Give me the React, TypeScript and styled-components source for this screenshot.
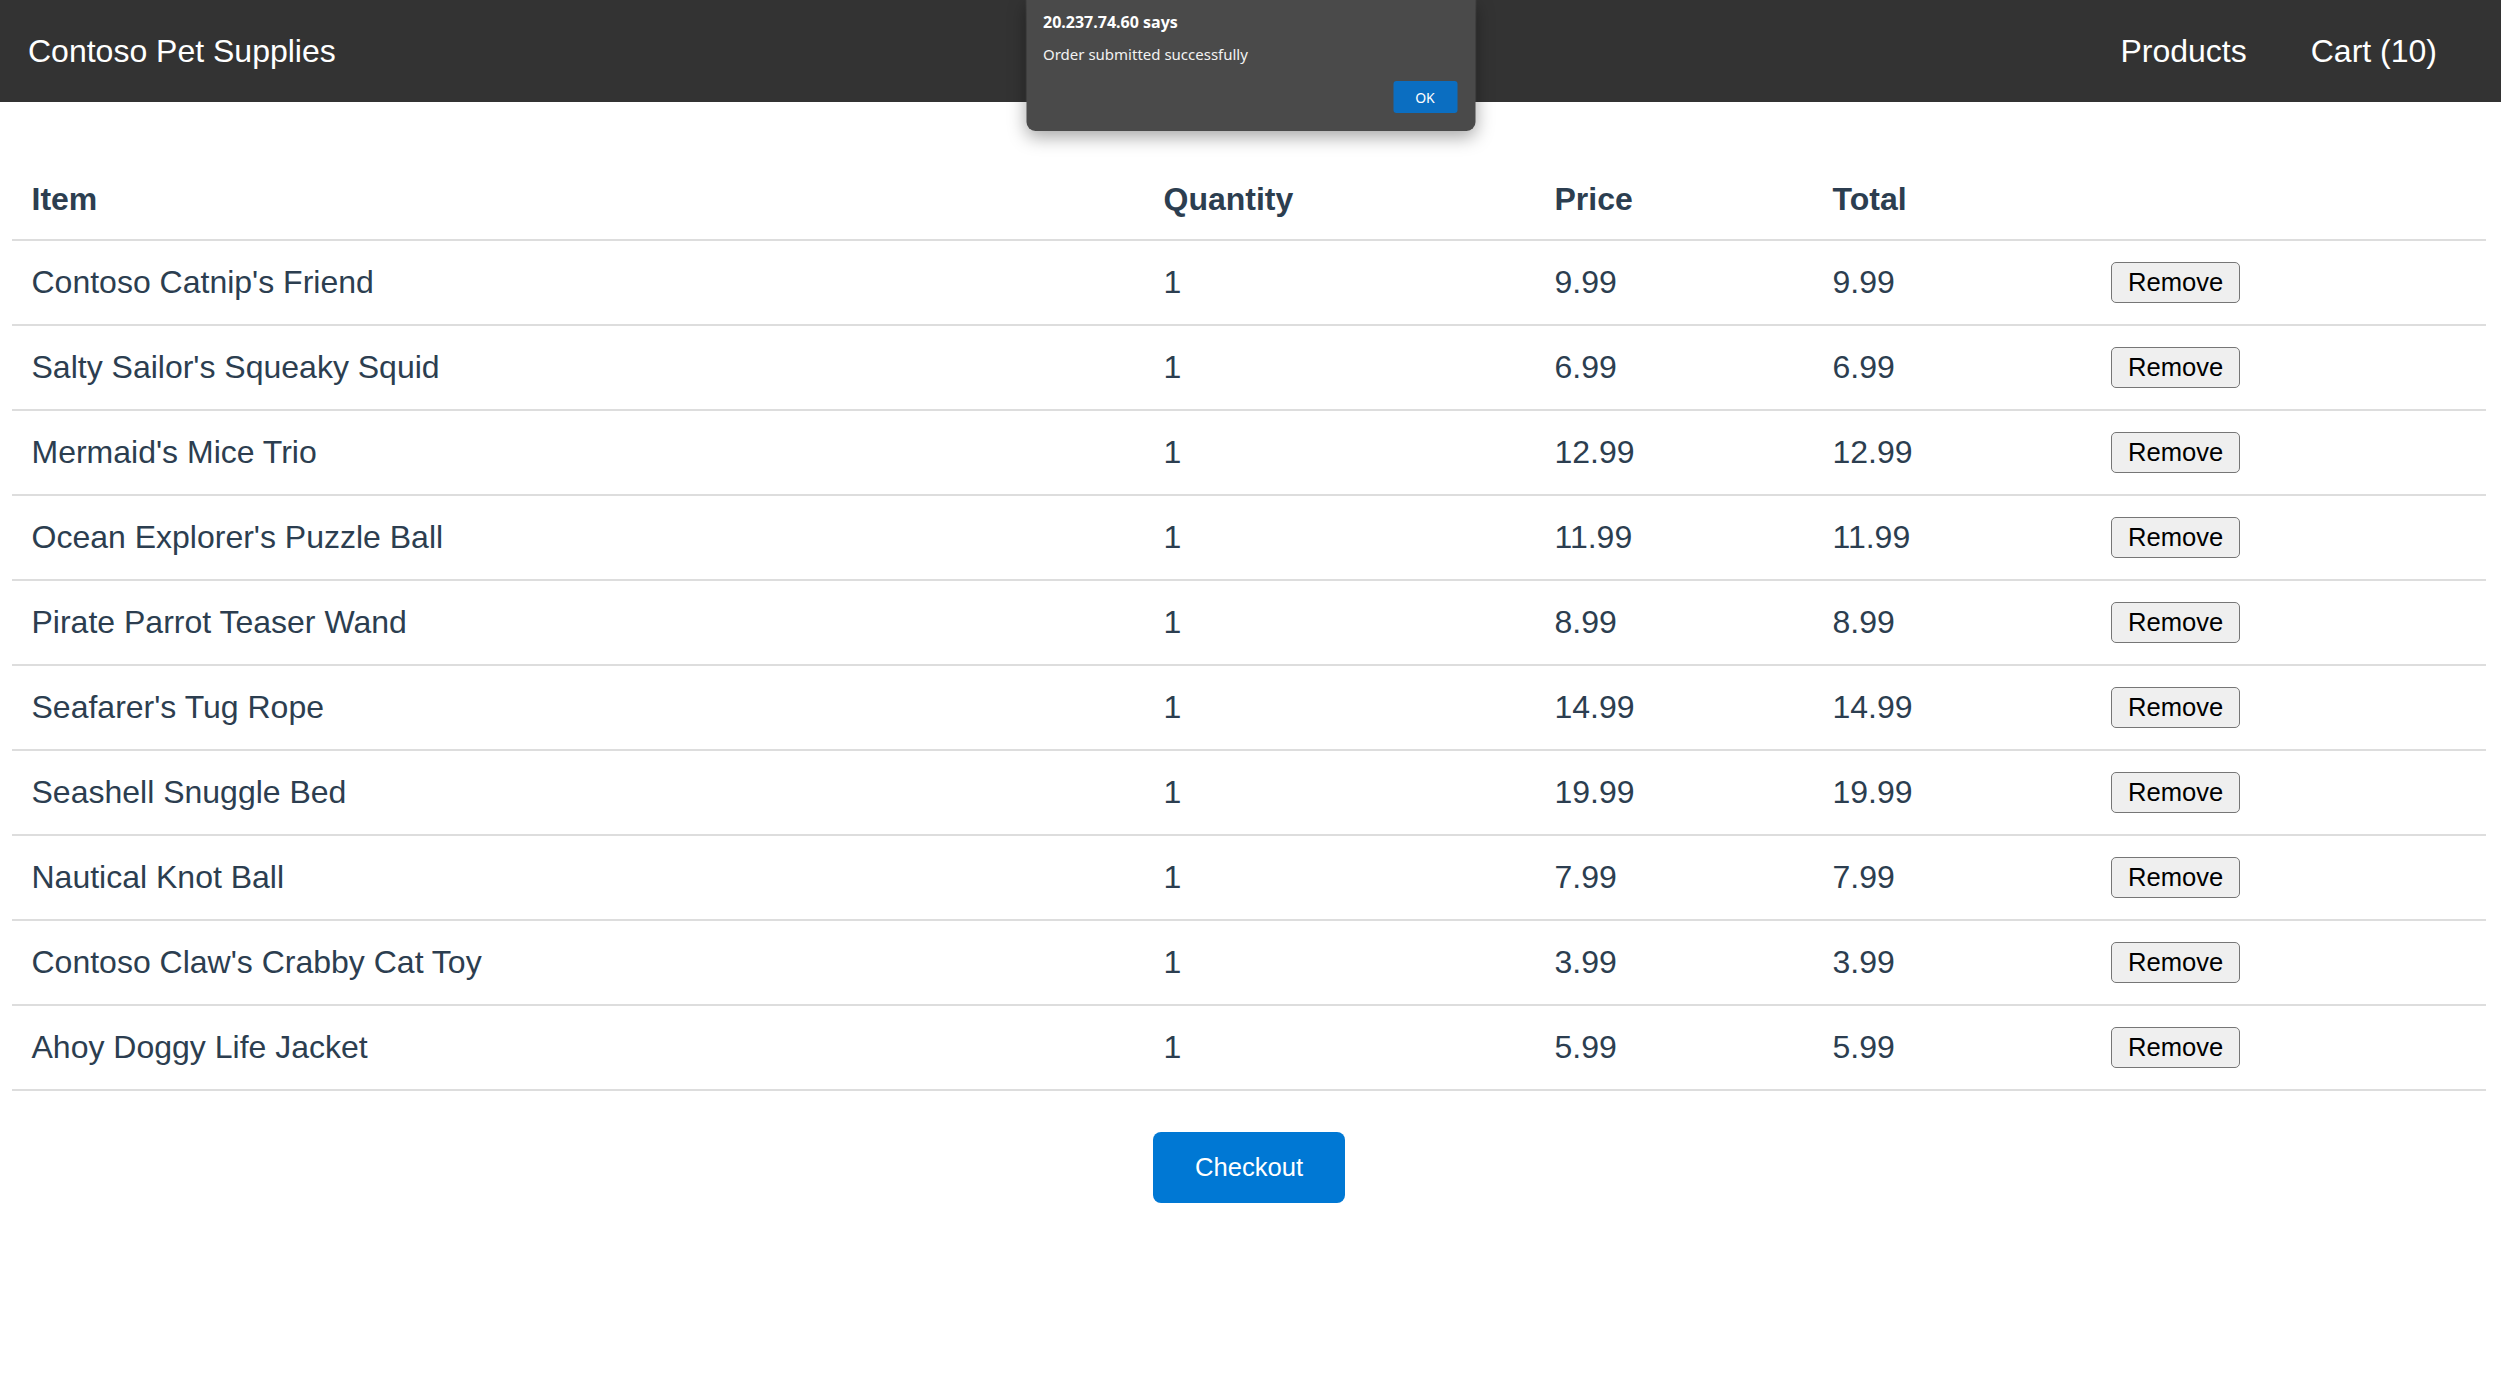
import React from "react";
import styled, { createGlobalStyle } from "styled-components";

const GlobalStyle = createGlobalStyle`
  html, body {
    margin: 0;
    padding: 0;
    background: #ffffff;
  }
  body {
    font-family: "Liberation Sans", Arial, Helvetica, sans-serif;
    color: #2c3e50;
  }
`;

const Page = styled.div`
  position: relative;
  min-height: 1395px;
  background: #ffffff;
`;

const Header = styled.header`
  height: 102px;
  background: #333333;
  display: flex;
  align-items: center;
  justify-content: space-between;
  padding: 0 64px 0 28px;
  box-sizing: border-box;
`;

const Brand = styled.div`
  color: #ffffff;
  font-size: 32px;
`;

const Nav = styled.nav`
  display: flex;
  gap: 64px;
`;

const NavLink = styled.a`
  color: #ffffff;
  font-size: 32px;
  text-decoration: none;
  cursor: pointer;
`;

const Main = styled.main`
  padding: 54px 15px 0 12px;
  display: flex;
  flex-direction: column;
  align-items: center;
`;

const Table = styled.table`
  width: 100%;
  border-collapse: collapse;
  table-layout: fixed;
  font-size: 32px;
  color: #2c3e50;
`;

const Col = styled.col<{ $w?: number }>`
  width: ${(p) => (p.$w ? `${p.$w}px` : "auto")};
`;

const Th = styled.th`
  text-align: left;
  font-weight: bold;
  height: 62px;
  padding: 0 19.5px 21px 19.5px;
  border-bottom: 2px solid #dddddd;
  vertical-align: bottom;
`;

const Td = styled.td`
  height: 83px;
  padding: 0 19.5px;
  border-bottom: 2px solid #dddddd;
  vertical-align: middle;
  white-space: nowrap;
`;

const RemoveButton = styled.button`
  font-family: "Liberation Sans", Arial, sans-serif;
  font-size: 25.6px;
  color: #000000;
  background: #efefef;
  border: 1.5px solid #767676;
  border-radius: 5px;
  padding: 5px 16px;
  line-height: normal;
  cursor: pointer;
`;

const CheckoutButton = styled.button`
  margin-top: 41px;
  font-family: "Liberation Sans", Arial, sans-serif;
  font-size: 25.6px;
  color: #ffffff;
  background: #0078d4;
  border: none;
  border-radius: 8px;
  padding: 21px 42px;
  line-height: normal;
  cursor: pointer;
`;

const Dialog = styled.div`
  position: absolute;
  top: 0;
  left: 50%;
  transform: translateX(-50%);
  width: 449px;
  height: 131px;
  box-sizing: border-box;
  background: #4a4a4a;
  border-radius: 0 0 9px 9px;
  box-shadow: 0 6px 18px rgba(0, 0, 0, 0.35), 0 0 0 1px rgba(255, 255, 255, 0.06);
  padding: 12px 18px 0 17px;
  font-family: "Noto Sans", "Open Sans", sans-serif;
  color: #ffffff;
  display: flex;
  flex-direction: column;
`;

const DialogTitle = styled.div`
  font-size: 16px;
  font-weight: bold;
  line-height: 20px;
`;

const DialogMessage = styled.div`
  margin-top: 12px;
  font-size: 15px;
  line-height: 20px;
  color: #f2f2f2;
`;

const DialogActions = styled.div`
  margin-top: 17px;
  display: flex;
  justify-content: flex-end;
`;

const OkButton = styled.button`
  width: 64px;
  height: 32px;
  border: none;
  border-radius: 3px;
  background: #0b6ec1;
  color: #ffffff;
  font-family: "Noto Sans", "Open Sans", sans-serif;
  font-size: 14px;
  padding: 0;
  cursor: pointer;
`;

const items = [
  { name: "Contoso Catnip's Friend", qty: 1, price: 9.99 },
  { name: "Salty Sailor's Squeaky Squid", qty: 1, price: 6.99 },
  { name: "Mermaid's Mice Trio", qty: 1, price: 12.99 },
  { name: "Ocean Explorer's Puzzle Ball", qty: 1, price: 11.99 },
  { name: "Pirate Parrot Teaser Wand", qty: 1, price: 8.99 },
  { name: "Seafarer's Tug Rope", qty: 1, price: 14.99 },
  { name: "Seashell Snuggle Bed", qty: 1, price: 19.99 },
  { name: "Nautical Knot Ball", qty: 1, price: 7.99 },
  { name: "Contoso Claw's Crabby Cat Toy", qty: 1, price: 3.99 },
  { name: "Ahoy Doggy Life Jacket", qty: 1, price: 5.99 },
];

export default function App() {
  return (
    <Page>
      <GlobalStyle />
      <Header>
        <Brand>Contoso Pet Supplies</Brand>
        <Nav>
          <NavLink>Products</NavLink>
          <NavLink>Cart (10)</NavLink>
        </Nav>
      </Header>
      <Main>
        <Table>
          <colgroup>
            <Col $w={1132} />
            <Col $w={391} />
            <Col $w={278} />
            <Col $w={278.5} />
            <Col />
          </colgroup>
          <thead>
            <tr>
              <Th>Item</Th>
              <Th>Quantity</Th>
              <Th>Price</Th>
              <Th>Total</Th>
              <Th></Th>
            </tr>
          </thead>
          <tbody>
            {items.map((it) => (
              <tr key={it.name}>
                <Td>{it.name}</Td>
                <Td>{it.qty}</Td>
                <Td>{it.price.toFixed(2)}</Td>
                <Td>{(it.price * it.qty).toFixed(2)}</Td>
                <Td>
                  <RemoveButton>Remove</RemoveButton>
                </Td>
              </tr>
            ))}
          </tbody>
        </Table>
        <CheckoutButton>Checkout</CheckoutButton>
      </Main>
      <Dialog>
        <DialogTitle>20.237.74.60 says</DialogTitle>
        <DialogMessage>Order submitted successfully</DialogMessage>
        <DialogActions>
          <OkButton>OK</OkButton>
        </DialogActions>
      </Dialog>
    </Page>
  );
}
